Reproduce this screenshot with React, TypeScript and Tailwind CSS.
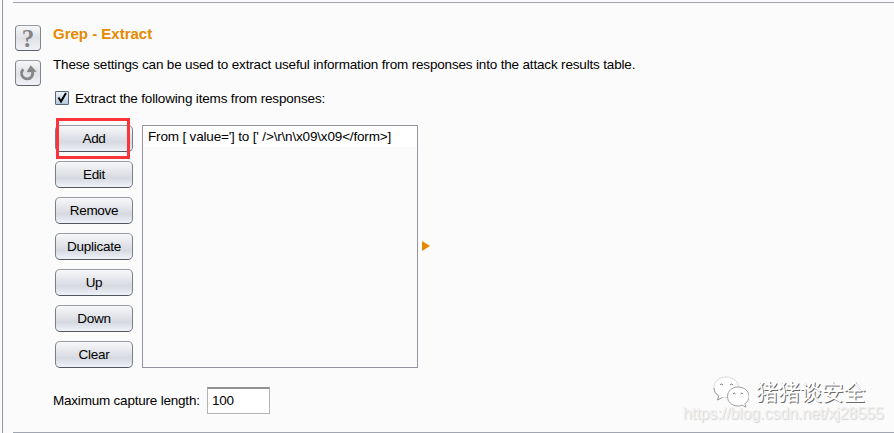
import type { ReactNode } from "react";

const actions = ["Add", "Edit", "Remove", "Duplicate", "Up", "Down", "Clear"];

function ToolButton({ label, children }: { label: string; children: ReactNode }) {
  return (
    <button
      aria-label={label}
      className="flex h-[26px] w-[26px] items-center justify-center rounded-[4px] border border-[#80848b] border-t-[#979ca3] border-b-[#5f646c] bg-linear-to-b from-[#f7f7f9] via-[#dfe1e7] to-[#f0f2f8] text-[#858585]"
    >
      {children}
    </button>
  );
}

function ActionButton({ label }: { label: string }) {
  return (
    <button className="h-[27px] w-[78px] rounded-[5px] border border-[#7b8088] border-t-[#979ca3] border-b-[#50555e] bg-linear-to-b from-[#f8f8fa] via-[#d6d9e0] via-65% to-[#f0f2fa] text-center leading-[25px] tracking-[-0.28px]">
      {label}
    </button>
  );
}

function Watermark() {
  return (
    <div className="absolute top-[374px] left-[683px] w-[206px]">
      <div className="flex h-[34px] items-center pl-[30px]">
        <svg width="36" height="34" viewBox="0 0 36 34" fill="#fff" stroke="#a8a8a8" strokeWidth="0.8">
          <path d="M13 3C6 3 1 7.600 1 13.500c0 3.500 1.700 6.400 4.700 8.300L4.500 26l5-2.600c5.500 1.300 16-1 16-10C25.500 7.500 20 3 13 3Z" stroke="#d0d0d0" />
          <path d="M1 14c0 3.500 1.700 6.400 4.700 7.800L4.500 26l5-2.600" fill="none" stroke="#888" />
          <path d="M25 13c-6 0-10.500 4-10.500 9.500S19 32 25 32c1.500 0 3-.3 4.300-.8l3.500 2-.8-3.500c2.300-1.600 4-4.200 4-7.200C36 17 31 13 25 13Z" stroke="#888" />
          <path d="M7 11q1.500-2 3 0M17 11q1.500-2 3 0M20 20q1.300-2 2.600 0M27.500 20q1.300-2 2.600 0" fill="none" stroke="#555" />
        </svg>
        <span className="relative -top-px ml-[7px] font-['Noto_Sans_CJK_SC',sans-serif] text-[22px] leading-[34px] tracking-[-0.1px] whitespace-nowrap text-white [text-shadow:1px_1px_0_#6a6a6a]">
          猪猪谈安全
        </span>
      </div>
      <div className="-mt-[4px] text-[16px] leading-[20px] tracking-[-0.1px] whitespace-nowrap text-[#f0f0f0] [text-shadow:1px_1px_1px_#d4d4d4]">
        https://blog.csdn.net/xj28555
      </div>
    </div>
  );
}

export default function App() {
  return (
    <div className="relative h-[433px] w-[894px] overflow-hidden bg-[#fbfbfb] pl-[2px] font-['Liberation_Sans',Arial,sans-serif] text-[13.5px] tracking-[-0.17px] text-black">
      <div className="h-full border-l border-[#9297a3] pt-[2px] pl-[10px]">
        <div className="flex h-[431px] flex-col border-y border-[#a0a5b0]">
          <div className="flex pt-[22px] pl-[2px]">
            <div className="flex w-[38px] shrink-0 flex-col gap-[9px]">
              <ToolButton label="Help">
                <span className="pt-[2px] font-['Liberation_Serif',serif] text-[25px] leading-[22px] font-bold">?</span>
              </ToolButton>
              <ToolButton label="Restore defaults">
                <svg width="18" height="18" viewBox="0 0 18 18">
                  <path d="M4.300 5.200C2.200 7.500 2 11 4.200 13.200c2.400 2.400 6.300 2.200 8.300-.4 1.300-1.700 1.500-3.600.8-5.800" fill="none" stroke="currentColor" strokeWidth="2.800" />
                  <path d="M11.700 1.200 17.700 7.800 7.500 8.300Z" fill="currentColor" />
                </svg>
              </ToolButton>
            </div>
            <div className="flex flex-col">
              <h1 className="text-[15px] leading-[18px] font-bold tracking-normal whitespace-nowrap text-[#e58900]">Grep - Extract</h1>
              <p className="mt-[14px] leading-[16px] whitespace-nowrap">
                These settings can be used to extract useful information from responses into the attack results table.
              </p>
              <label className="mt-[17px] flex h-[16px] items-center pl-[2px] whitespace-nowrap">
                <span className="mr-[6px] flex h-[14px] w-[14px] items-center justify-center rounded-[1px] border border-[#56677c] bg-linear-to-b from-[#eef3f8] to-[#b4c8dc]">
                  <svg width="12" height="12" viewBox="0 0 12 12" fill="none" stroke="#000" strokeWidth="2">
                    <path d="m2.500 5.500 2.500 4 5-8.500" />
                  </svg>
                </span>
                <span className="pt-px leading-[16px]">Extract the following items from responses:</span>
              </label>
              <div className="mt-[19px] flex items-center pl-[2px]">
                <div className="relative flex w-[87px] flex-col gap-[9px]">
                  {actions.map((label) => (
                    <ActionButton key={label} label={label} />
                  ))}
                  <div className="absolute -top-[7px] left-[1px] h-[41px] w-[74px] border-[3px] border-[#fb3439]" />
                </div>
                <div className="h-[243px] w-[276px] border border-[#9295a0]">
                  <div className="h-[21px] bg-white pl-[5px] leading-[21px] whitespace-nowrap">
                    {"From [ value='] to [' />\\r\\n\\x09\\x09</form>]"}
                  </div>
                </div>
                <svg className="mb-[1px] ml-[4px]" width="8" height="10" viewBox="0 0 8 10">
                  <path d="M0 0 8 5 0 10Z" fill="#e58900" />
                </svg>
              </div>
              <div className="mt-[19px] flex items-center whitespace-nowrap">
                <span className="w-[154px] pt-[2px] tracking-[-0.21px]">Maximum capture length:</span>
                <span className="h-[27px] w-[63px] border border-[#b4b4b4] border-t-2 border-t-[#929292] bg-white pl-[4px] leading-[24px] tracking-[-0.3px]">
                  100
                </span>
              </div>
            </div>
          </div>
        </div>
      </div>
      <Watermark />
    </div>
  );
}
